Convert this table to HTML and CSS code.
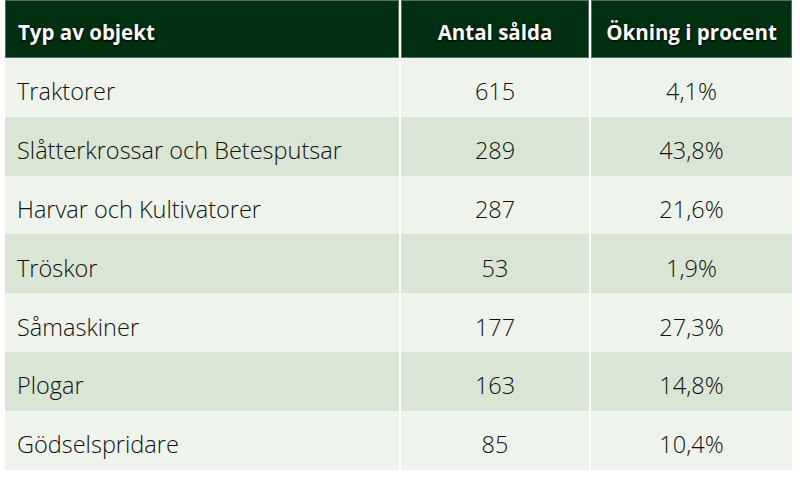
FILE: index.html
```html
<!DOCTYPE html>
<html lang="sv">
<head>
<meta charset="utf-8">
<link rel="stylesheet" href="styles.css">
</head>
<body>
<div class="wrap">
<table class="sales">
<colgroup>
<col class="c1"><col class="c2"><col class="c3">
</colgroup>
<thead>
<tr><th class="left">Typ av objekt</th><th>Antal sålda</th><th>Ökning i procent</th></tr>
</thead>
<tbody>
<tr><td class="left">Traktorer</td><td>615</td><td>4,1%</td></tr>
<tr><td class="left">Slåtterkrossar och Betesputsar</td><td>289</td><td>43,8%</td></tr>
<tr><td class="left">Harvar och Kultivatorer</td><td>287</td><td>21,6%</td></tr>
<tr><td class="left">Tröskor</td><td>53</td><td>1,9%</td></tr>
<tr><td class="left">Såmaskiner</td><td>177</td><td>27,3%</td></tr>
<tr><td class="left">Plogar</td><td>163</td><td>14,8%</td></tr>
<tr><td class="left">Gödselspridare</td><td>85</td><td>10,4%</td></tr>
</tbody>
</table>
</div>
</body>
</html>
```
FILE: styles.css
```css
html, body {
  margin: 0;
  padding: 0;
  background: #ffffff;
}
.wrap {
  padding-left: 3px;
}
.sales {
  width: 791px;
  table-layout: fixed;
  border-collapse: separate;
  border-spacing: 2px 0;
  font-family: "Open Sans", "Liberation Sans", sans-serif;
  color: #111111;
}
.c1 { width: 394px; }
.c2 { width: 188px; }
.c3 { width: 201px; }
.sales th {
  height: 58px;
  box-sizing: border-box;
  background: #00300f;
  border: 1px solid #5b6b5f;
  color: #ffffff;
  font-weight: 700;
  font-size: 20.5px;
  text-align: center;
  padding: 6px 6px 0;
  text-shadow: 0 0 2px #000, 0 1px 2px #000;
  white-space: nowrap;
}
.sales td {
  height: 58.8px;
  box-sizing: border-box;
  font-size: 23.5px;
  font-weight: 300;
  text-align: center;
  padding: 8px 10px 0;
  background: #eef4ec;
  white-space: nowrap;
}
.sales tbody tr:nth-child(even) td {
  background: #d9e6d3;
}
.sales .left {
  text-align: left;
  padding-left: 12px;
}
```
